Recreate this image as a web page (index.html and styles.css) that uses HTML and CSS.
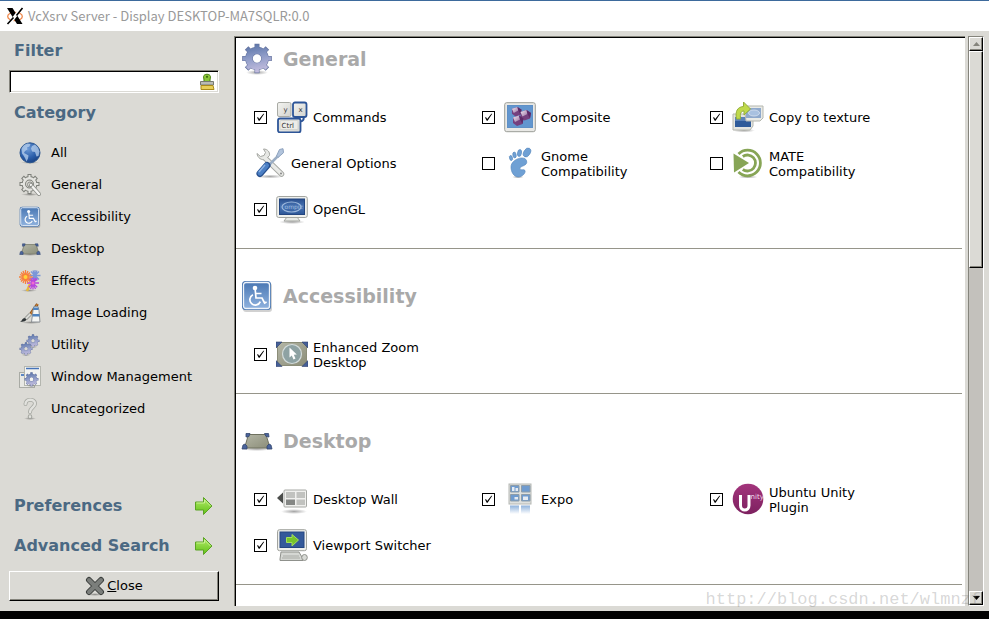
FILE: index.html
```html
<!DOCTYPE html>
<html lang="en">
<head>
<meta charset="utf-8">
<title>VcXsrv Server - Display DESKTOP-MA7SQLR:0.0</title>
<link rel="stylesheet" href="styles.css">
</head>
<body>
<svg class="defs" aria-hidden="true">
  <defs>
    <linearGradient id="g-gear" gradientUnits="userSpaceOnUse" x1="12" y1="1" x2="18" y2="31"><stop offset="0" stop-color="#5a74a8"/><stop offset=".45" stop-color="#8f9cc8"/><stop offset="1" stop-color="#cdc3e2"/></linearGradient>
    <radialGradient id="g-globe" cx=".4" cy=".3" r=".75"><stop offset="0" stop-color="#6d9ad6"/><stop offset=".6" stop-color="#2b5fab"/><stop offset="1" stop-color="#173f80"/></radialGradient>
    <linearGradient id="g-access" x1="0" y1="0" x2="0" y2="1"><stop offset="0" stop-color="#4a78b4"/><stop offset="1" stop-color="#8fb2de"/></linearGradient>
    <linearGradient id="g-desk" x1="0" y1="0" x2="1" y2="1"><stop offset="0" stop-color="#b4b6a6"/><stop offset="1" stop-color="#8b8d78"/></linearGradient>
    <linearGradient id="g-screen" x1="0" y1="0" x2="0" y2="1"><stop offset="0" stop-color="#2a4f8e"/><stop offset=".5" stop-color="#4a76b5"/><stop offset="1" stop-color="#2c5596"/></linearGradient>
    <linearGradient id="g-green" x1="0" y1="0" x2="0" y2="1"><stop offset="0" stop-color="#b5ec6a"/><stop offset="1" stop-color="#5fc016"/></linearGradient>
    <linearGradient id="g-unity" x1="0" y1="0" x2="0" y2="1"><stop offset="0" stop-color="#a3347c"/><stop offset="1" stop-color="#7d2160"/></linearGradient>
    <linearGradient id="g-fade" x1="0" y1="0" x2="0" y2="1"><stop offset="0" stop-color="#8fb2dc"/><stop offset="1" stop-color="#fff"/></linearGradient>
    <linearGradient id="g-key" x1="0" y1="0" x2="1" y2="1"><stop offset="0" stop-color="#f4f4f1"/><stop offset="1" stop-color="#d2d3ce"/></linearGradient>
    <linearGradient id="g-cube" x1="0" y1="0" x2="1" y2="1"><stop offset="0" stop-color="#f3ecf4"/><stop offset="1" stop-color="#9a70a2"/></linearGradient>
    <radialGradient id="g-shadow"><stop offset="0" stop-color="#000" stop-opacity=".35"/><stop offset="1" stop-color="#000" stop-opacity="0"/></radialGradient>

    <symbol id="i-gear" viewBox="0 0 32 32">
      <ellipse cx="16" cy="29.500" rx="11" ry="2.500" fill="url(#g-shadow)"/>
      <g fill="none" stroke="#66749f">
        <circle cx="16" cy="15.500" r="8" stroke-width="7.600"/>
        <path d="M16 .7v6M16 24.300v6M1.200 15.500h6M24.800 15.500h6M5.600 5.100l4.200 4.200M22.200 21.700l4.200 4.200M26.400 5.100l-4.200 4.200M9.800 21.700l-4.200 4.200" stroke-width="5"/>
      </g>
      <g fill="none" stroke="url(#g-gear)">
        <circle cx="16" cy="15.500" r="8" stroke-width="6.500"/>
        <path d="M16 1.500v6M16 23.500v6M2 15.500h6M24 15.500h6M6.200 5.700l4.200 4.200M21.600 21.100l4.200 4.200M25.800 5.700l-4.200 4.200M10.400 21.100l-4.200 4.200" stroke-width="3.800"/>
      </g>
    </symbol>

    <symbol id="i-globe" viewBox="0 0 22 22">
      <ellipse cx="11" cy="20.500" rx="9" ry="1.500" fill="url(#g-shadow)"/>
      <circle cx="11" cy="10.800" r="10" fill="url(#g-globe)" stroke="#2c568f"/>
      <path d="M2.500 7c1-3 3.500-5 6-5.500l3 .5-1 2.500-2.500 1 .5 2-2.500 1.500-1 2 2 1 2.500 1.500-.5 3-1.500 3-1.500-3.500-1.500-2.500-1.500-2zM13 4l3-1.500 3 3 1.500 4-1 4.500-2 .5-1.500-4.500-3-.5-1-3z" fill="#b9d2ee" opacity=".75"/>
    </symbol>

    <symbol id="i-prefs" viewBox="0 0 22 22">
      <ellipse cx="11" cy="20.500" rx="9" ry="1.500" fill="url(#g-shadow)"/>
      <g fill="none" stroke="#7d7f79"><circle cx="10.500" cy="10" r="5.700" stroke-width="4.500"/><path d="M10.500 0v4M10.500 16v4M.5 10h4M16.500 10h4M3.500 3l3 3M17.500 3l-3 3M3.500 17l3-3" stroke-width="4"/></g>
      <g fill="none" stroke="#e4e4e0"><circle cx="10.500" cy="10" r="5.700" stroke-width="2.500"/><path d="M10.500 1v4M10.500 15v4M1.500 10h4M15.500 10h4M4.200 3.700l3 3M16.800 3.700l-3 3M4.200 16.300l3-3" stroke-width="2"/></g>
      <path d="M12 11l8 9" stroke="#888a85" stroke-width="4" stroke-linecap="round"/>
      <path d="M12 11l8 9" stroke="#f4f4f2" stroke-width="2.500" stroke-linecap="round"/>
      <circle cx="11" cy="10.500" r="2.500" fill="none" stroke="#8b8d88"/>
    </symbol>

    <symbol id="i-access" viewBox="0 0 32 32">
      <rect x="2" y="3" width="29" height="29" rx="3" fill="#000" opacity=".18"/>
      <rect x="1" y="1" width="29" height="29" rx="3.500" fill="#4876b0"/>
      <rect x="2.500" y="2.500" width="26" height="26" rx="2.500" fill="url(#g-access)" stroke="#eef4fb" stroke-width="1.300"/>
      <circle cx="14" cy="8" r="2.300" fill="#fff"/>
      <g fill="none" stroke="#fff" stroke-width="1.700"><path d="M14.200 9.500l.8 8.500h6l2.600 5 2-1M14.800 13.500h5.700"/><path d="M11.900 14.800a5.400 5.400 0 1 0 7.400 6.800"/></g>
    </symbol>

    <symbol id="i-desktop" viewBox="0 0 32 32">
      <ellipse cx="16" cy="24" rx="15" ry="2" fill="url(#g-shadow)"/>
      <path d="M7.500 9.500h17.500l4 13.500H3.500z" fill="url(#g-desk)" stroke="#6f715f"/>
      <g fill="#4a639b" stroke="#34476f" stroke-width=".8"><path d="M5 8.500h4l-1 3-3 .5zM23.500 8.500h4l.5 3.500-3-.5z"/><path d="M1 24l1-4 2-1 2 2v3zM31 24l-1-4-2-1-2 2v3z"/></g>
    </symbol>

    <symbol id="i-effects" viewBox="0 0 22 22">
      <ellipse cx="10" cy="20.500" rx="8" ry="1.500" fill="url(#g-shadow)"/>
      <path d="M8 21l3-7" stroke="#e8b93a" stroke-width="2.500"/>
      <path d="M16 0v11M10.500 5.500h11M12 1.500l8 8M20 1.500l-8 8M14 .5l4 10M18 .5l-4 10" stroke="#7b96d8" stroke-width="1.300"/>
      <path d="M14 7.500v12M8 13h12M9.800 8.800l8.400 8.400M18.200 8.800l-8.400 8.400M11.500 8l5 11M16.500 8l-5 11" stroke="#b846dc" stroke-width="1.300"/>
      <path d="M6.500 0v14M0 7h13.500M2 2.500l9 9M11 2.500l-9 9M4 1l5 12M9 1L4 13M1 4.500l11 5M1 9.500l11-5" stroke="#f8803c" stroke-width="1.300"/>
      <circle cx="6.500" cy="7" r="2" fill="#ffd23c"/><circle cx="14" cy="13" r="1.500" fill="#f06bd0"/>
    </symbol>

    <symbol id="i-image" viewBox="0 0 22 22">
      <ellipse cx="12" cy="20.500" rx="10" ry="1.500" fill="url(#g-shadow)"/>
      <path d="M18.500 2l-7 10" stroke="#8a5018" stroke-width="3"/><path d="M18.500 2l-7 10" stroke="#c9803a" stroke-width="1.300"/>
      <path d="M11.500 12l-5 5" stroke="#8c8e89" stroke-width="3.500"/><path d="M11.500 12l-5 5" stroke="#d9dad6" stroke-width="2"/>
      <path d="M1 19.500c2 0 2-3.500 5-3.500l1.500 1.500c-1 2-3.500 2.500-6.500 2z" fill="#2e3436"/>
      <path d="M14 8.500l1-4h4l1 4 1 11.500h-8.500z" fill="#f4f5f3" stroke="#8c9196"/>
      <path d="M14 5.500h5.500v2.500H14zM13.500 12h7v2.500h-7z" fill="#4e83c0"/>
    </symbol>

    <symbol id="i-utility" viewBox="0 0 22 22">
      <use href="#i-gear" x="7" y="0" width="14" height="14"/>
      <use href="#i-gear" x="0" y="8" width="14" height="14"/>
    </symbol>

    <symbol id="i-windows" viewBox="0 0 22 22">
      <rect x=".5" y="6.500" width="15" height="15" fill="#e8e8e4" stroke="#a9aba5"/><path d="M2 9h5" stroke="#5b86c4" stroke-width="2"/>
      <rect x="5.500" y=".5" width="16" height="19" fill="#f3f3f0" stroke="#b4b6af"/><path d="M7 2.500h13" stroke="#4673b8" stroke-width="1.500"/>
      <use href="#i-gear" x="5" y="6" width="15" height="15"/>
    </symbol>

    <symbol id="i-unknown" viewBox="0 0 22 22">
      <ellipse cx="11" cy="20.500" rx="6" ry="1.500" fill="url(#g-shadow)"/>
      <g fill="none" stroke-linecap="round"><path d="M6.500 6c0-5.500 9.500-5.500 9.500-.5 0 4-5 4-5 8.500" stroke="#a5a7a1" stroke-width="4"/><path d="M11 18.500v.2" stroke="#a5a7a1" stroke-width="4.500"/><path d="M6.500 6c0-5.500 9.500-5.500 9.500-.5 0 4-5 4-5 8.500M11 18.500v.2" stroke="#e2e2de" stroke-width="2.400"/></g>
    </symbol>

    <symbol id="i-arrow" viewBox="0 0 22 22">
      <path d="M2.500 7h8V2.500l8.500 8.500-8.500 8.500V15h-8z" fill="url(#g-green)" stroke="#5ba324" stroke-linejoin="round"/>
      <path d="M3.500 8h8V5l6 6" fill="none" stroke="#d3f5a2" stroke-width=".8"/>
    </symbol>

    <symbol id="i-close" viewBox="0 0 20 20">
      <ellipse cx="10" cy="18.500" rx="9" ry="1.500" fill="url(#g-shadow)"/>
      <path d="M4 4l12 12M16 4L4 16" stroke="#3c3f3d" stroke-width="6" stroke-linecap="round"/>
      <path d="M4 4l12 12M16 4L4 16" stroke="#7b7e7b" stroke-width="4" stroke-linecap="round"/>
    </symbol>

    <symbol id="i-brush" viewBox="0 0 16 18">
      <path d="M5 9V7L4.500 3.500C5 .5 11 .5 11.500 3.500L11 7v2z" fill="#8cc63a" stroke="#4a8212"/>
      <circle cx="8" cy="3.800" r="1.100" fill="#3b6a10"/>
      <path d="M1.500 8.500h13V12h-13z" fill="#b9bbb4" stroke="#777a70"/>
      <path d="M2 12.500h12l1 4H2z" fill="#e8cf58" stroke="#a98a1a"/>
    </symbol>

    <symbol id="i-x11" viewBox="0 0 18 18">
      <ellipse cx="9" cy="9.500" rx="7.300" ry="4.200" fill="none" stroke="#ee8648" stroke-width="1.300"/>
      <path d="M1 1h5.500l10 16H11z" fill="#000"/>
      <path d="M15.500 1L3 17" stroke="#fff" stroke-width="3"/>
      <path d="M16.500 1l-6 7.500M7.500 10.500L1.500 17" stroke="#000" stroke-width="1.600"/>
    </symbol>

    <symbol id="i-commands" viewBox="0 0 32 32">
      <path d="M27 15c2 4-1 6-4 5" fill="none" stroke="#2d5598" stroke-width="2"/>
      <rect x="1.500" y="1.500" width="13.500" height="14" rx="1.500" fill="url(#g-key)" stroke="#a9aba5"/>
      <rect x="17" y="1.500" width="13.500" height="14.500" rx="2" fill="url(#g-key)" stroke="#2d5598" stroke-width="1.800"/>
      <rect x="2" y="17.500" width="22.500" height="14" rx="2" fill="url(#g-key)" stroke="#2d5598" stroke-width="1.800"/>
      <rect x="4" y="19.500" width="18" height="9" rx="1" fill="#ececE8" stroke="#c8cac4" stroke-width=".6"/>
      <g class="glyphs" fill="#333"><text x="7.500" y="10.500" font-size="7">y</text><text x="22.500" y="10.500" font-size="7">x</text><text x="5.500" y="26.500" font-size="7">Ctrl</text></g>
    </symbol>

    <symbol id="i-cube" viewBox="0 0 12 12">
      <path d="M1 3l6-2 4.500 3-1 5.500-5.500 2L1 8.500z" fill="#75407e"/>
      <path d="M1 3l6-2 1 4-5 2.500z" fill="url(#g-cube)"/>
      <path d="M7 1l4.500 3-1 5.500L8 5z" fill="#5d2a68"/>
    </symbol>

    <symbol id="i-composite" viewBox="0 0 32 32">
      <rect x=".7" y="1.700" width="30.600" height="29" rx="2" fill="#e9e9e6" stroke="#9b9d97"/>
      <rect x="3.500" y="4.500" width="25" height="22" fill="#6296cf" stroke="#5f90c6"/>
      <use href="#i-cube" x="7" y="5" width="11" height="11"/>
      <use href="#i-cube" x="15.500" y="8" width="12" height="12"/>
      <use href="#i-cube" x="8" y="13.500" width="12" height="12"/>
    </symbol>

    <symbol id="i-copy" viewBox="0 0 32 32">
      <ellipse cx="12" cy="29.500" rx="11" ry="2" fill="url(#g-shadow)"/>
      <path d="M1 13h20v12l-3 4H1z" fill="#e4e5e1" stroke="#b5b7af"/><path d="M3 16h16v10H3z" fill="#2f5b9a"/><path d="M3 16h16v4H3z" fill="#5c82b8"/>
      <path d="M12 5h19v12l-3 3H14z" fill="#e9eae6" stroke="#b5b7af"/><path d="M14 7h15v10H14z" fill="#8fa9cc"/><ellipse cx="22" cy="12" rx="5.500" ry="3" fill="#a9c1e0" stroke="#dfe8f3" stroke-width=".7"/>
      <path d="M4.500 18c-1.500-8 1-12 7-12.500V1l7 7-6.500 6V10c-3.500 0-4 3-3.500 8z" fill="#bfd94a" stroke="#94ae3a"/>
    </symbol>

    <symbol id="i-tools" viewBox="0 0 32 32">
      <ellipse cx="16" cy="29.500" rx="13" ry="2" fill="url(#g-shadow)"/>
      <path d="M11 11l16.500 16" stroke="#a5a7a2" stroke-width="5.500" stroke-linecap="round"/>
      <path d="M3 6.500c.5 4.500 4.500 7 8.500 6l4-4c.5-3.500-2-6.500-6-6.500l2 3.500-1.500 3-3.500 1z" fill="#e6e7e4" stroke="#a5a7a2"/>
      <path d="M11 11l16.500 16" stroke="#e9eae7" stroke-width="3.800" stroke-linecap="round"/><circle cx="27" cy="26.500" r="1" fill="#888"/>
      <path d="M14 19L25 8" stroke="#9badc4" stroke-width="2.500"/><path d="M22.500 9l3-6.500 3.500-.8.500 4-5.500 4.800z" fill="#b2c4dc" stroke="#8da2be"/>
      <path d="M6 26.500l7-8" stroke="#274f8d" stroke-width="7" stroke-linecap="round"/><path d="M6 26l6.500-7.500" stroke="#4b7fc4" stroke-width="5" stroke-linecap="round"/><path d="M5 25l6-7" stroke="#8eb4e4" stroke-width="1.300"/>
    </symbol>

    <symbol id="i-gnome" viewBox="0 0 32 32">
      <ellipse cx="14" cy="30" rx="6" ry="1.500" fill="url(#g-shadow)"/>
      <g fill="#6fa0d4" stroke="#5083ba" stroke-width=".6">
        <ellipse cx="23" cy="5.500" rx="3.200" ry="4.800" transform="rotate(30 23 5.500)"/><ellipse cx="15.500" cy="6" rx="2" ry="3.500" transform="rotate(10 15.500 6)"/><ellipse cx="10.500" cy="8" rx="1.700" ry="3" transform="rotate(-8 10.500 8)"/><ellipse cx="7" cy="11" rx="1.500" ry="2.600" transform="rotate(-15 7 11)"/>
        <path d="M22.500 13.500c2 6-7.500 5-6.500 8.500.6 2 4-.5 5 1.500 1 2.500-3 6.500-6.500 6.500-5 0-7.500-5.500-7.500-10 0-8 13.500-12 15.500-6.500z"/>
      </g>
    </symbol>

    <symbol id="i-mate" viewBox="0 0 32 32">
      <ellipse cx="16" cy="30" rx="10" ry="1.500" fill="url(#g-shadow)"/>
      <g fill="none" stroke="#87a556" stroke-width="2.800"><path d="M6.500 7a12.800 12.800 0 1 1 0 18"/><path d="M10.800 9.500a8 8 0 1 1 0 13"/></g>
      <path d="M1.500 6.500L17 16 2 25.500z" fill="#87a556"/>
    </symbol>

    <symbol id="i-opengl" viewBox="0 0 32 32">
      <ellipse cx="16" cy="29" rx="13" ry="2" fill="url(#g-shadow)"/>
      <path d="M11 24h10l3 4H8z" fill="#e8e9e6" stroke="#a4a6a1"/>
      <rect x=".7" y="3.500" width="30.600" height="21" rx="2" fill="#eff0ed" stroke="#a4a6a1"/>
      <rect x="3.500" y="6" width="25" height="15.500" fill="url(#g-screen)" stroke="#244680"/>
      <ellipse cx="15.500" cy="14" rx="9.500" ry="5" fill="none" stroke="#9db8dc" stroke-width="1.200"/>
      <text class="glyphs" x="8.500" y="16" font-size="6" fill="#9db8dc">ompiz</text>
    </symbol>

    <symbol id="i-zoom" viewBox="0 0 32 32">
      <rect x="1.500" y="4.500" width="29" height="23" fill="url(#g-desk)" stroke="#8b8d78"/>
      <path d="M0 4h6L0 10zM32 4h-6l6 6zM0 28.500h6l-6-6zM32 28.500h-6l6-6z" fill="#455f97" stroke="#2d406c" stroke-width=".6"/>
      <circle cx="16" cy="16" r="9.500" fill="#8ea2a3" stroke="#d3dcdc" stroke-width="1.200"/>
      <path d="M13.500 9.500v10l2.300-2 1.700 4 2-1-1.700-3.700 3-.3z" fill="#fff"/>
    </symbol>

    <symbol id="i-wall" viewBox="0 0 32 32">
      <ellipse cx="18" cy="28.500" rx="13" ry="2.500" fill="url(#g-shadow)"/>
      <path d="M7 9.500v11L1 15z" fill="#4b4d4b"/>
      <rect x="8" y="7" width="22.500" height="17" rx="1" fill="#f0f0ee" stroke="#a6a8a4"/>
      <path d="M10 9h9v6h-9zM20.500 9H29v6h-8.500zM20.500 16.500H29v5.500h-8.500z" fill="#c1c2bf"/><path d="M10 16.500h9v5.500h-9z" fill="#858785"/>
    </symbol>

    <symbol id="i-expo" viewBox="0 0 32 32">
      <rect x="5" y="1" width="22" height="20" fill="#dfe1df" stroke="#b5b7b3"/>
      <g fill="#6f9bcf" stroke="#8e9da9"><path d="M6.500 2.500h8.500v6.500H6.500zM17.500 2.500H26v6.500h-8.500zM6.500 11.500h8.500V18H6.500zM17.500 11.500H26V18h-8.500z"/></g>
      <path d="M8 4h2.500v4H8zM11.500 5H14v3h-2.500zM10.500 14H14v2.500h-3.500zM19 13.500h5V17h-5z" fill="#e5ebf3"/>
      <path d="M6 22.500h9V31H6zM17 22.500h9V31h-9z" fill="url(#g-fade)"/>
    </symbol>

    <symbol id="i-unity" viewBox="0 0 32 32">
      <circle cx="16" cy="16" r="15.300" fill="url(#g-unity)"/>
      <path d="M8.500 12v10.500c0 6 8.500 6 8.500 0V12" fill="none" stroke="#fff" stroke-width="3"/>
      <text class="glyphs" x="18.500" y="16" font-size="7" fill="#f4dcec">nity</text>
    </symbol>

    <symbol id="i-switcher" viewBox="0 0 32 32">
      <path d="M5 23h18l4 7v1.500H4V30z" fill="#d5d7d3" stroke="#8f918c"/><path d="M7 27h16M6 29h18" stroke="#a9aba6"/>
      <rect x="1.500" y=".7" width="29" height="21" rx="2" fill="#eeefec" stroke="#a1a39e"/>
      <rect x="4" y="3" width="24" height="15.500" fill="#34599a" stroke="#244680"/>
      <path d="M10.500 8.500h5.500V5.500l6.500 5.500-6.500 6v-3.500h-5.500z" fill="#76c42c" stroke="#a4e05c"/>
      <ellipse cx="28.500" cy="28.500" rx="2.800" ry="3" fill="#d8dad6" stroke="#8f918c"/>
    </symbol>
  </defs>
</svg>

<div class="window">
  <header class="titlebar">
    <svg class="title-icon" aria-hidden="true"><use href="#i-x11"/></svg>
    <h1 class="title">VcXsrv Server - Display DESKTOP-MA7SQLR:0.0</h1>
  </header>

  <div class="body">
    <aside class="sidebar">
      <label class="side-heading" for="filter">Filter</label>
      <div class="field">
        <input id="filter" class="field-input" type="text">
        <button class="field-clear" type="button" aria-label="Clear"><svg width="16" height="18"><use href="#i-brush"/></svg></button>
      </div>
      <h2 class="side-heading category-heading">Category</h2>
      <nav class="categories">
        <button class="category" type="button"><svg class="small-icon"><use href="#i-globe"/></svg>All</button>
        <button class="category" type="button"><svg class="small-icon"><use href="#i-prefs"/></svg>General</button>
        <button class="category" type="button"><svg class="small-icon"><use href="#i-access"/></svg>Accessibility</button>
        <button class="category" type="button"><svg class="small-icon"><use href="#i-desktop"/></svg>Desktop</button>
        <button class="category" type="button"><svg class="small-icon"><use href="#i-effects"/></svg>Effects</button>
        <button class="category" type="button"><svg class="small-icon"><use href="#i-image"/></svg>Image Loading</button>
        <button class="category" type="button"><svg class="small-icon"><use href="#i-utility"/></svg>Utility</button>
        <button class="category" type="button"><svg class="small-icon"><use href="#i-windows"/></svg>Window Management</button>
        <button class="category" type="button"><svg class="small-icon"><use href="#i-unknown"/></svg>Uncategorized</button>
      </nav>
      <div class="side-links">
        <button class="side-link" type="button">Preferences<svg class="small-icon"><use href="#i-arrow"/></svg></button>
        <button class="side-link" type="button">Advanced Search<svg class="small-icon"><use href="#i-arrow"/></svg></button>
      </div>
      <button class="close" type="button"><svg width="20" height="20"><use href="#i-close"/></svg><span><u>C</u>lose</span></button>
    </aside>

    <main class="panel">
      <section class="group">
        <h2 class="group-title"><svg class="icon"><use href="#i-gear"/></svg>General</h2>
        <div class="plugins">
          <div class="plugin"><input class="check" type="checkbox" id="p-commands" checked><label class="plugin-label" for="p-commands"><svg class="icon"><use href="#i-commands"/></svg><span class="name">Commands</span></label></div>
          <div class="plugin"><input class="check" type="checkbox" id="p-composite" checked><label class="plugin-label" for="p-composite"><svg class="icon"><use href="#i-composite"/></svg><span class="name">Composite</span></label></div>
          <div class="plugin"><input class="check" type="checkbox" id="p-copy" checked><label class="plugin-label" for="p-copy"><svg class="icon"><use href="#i-copy"/></svg><span class="name">Copy to texture</span></label></div>
          <div class="plugin"><button class="plugin-label" type="button"><svg class="icon"><use href="#i-tools"/></svg><span class="name">General Options</span></button></div>
          <div class="plugin"><input class="check" type="checkbox" id="p-gnome"><label class="plugin-label" for="p-gnome"><svg class="icon"><use href="#i-gnome"/></svg><span class="name">Gnome Compatibility</span></label></div>
          <div class="plugin"><input class="check" type="checkbox" id="p-mate"><label class="plugin-label" for="p-mate"><svg class="icon"><use href="#i-mate"/></svg><span class="name">MATE Compatibility</span></label></div>
          <div class="plugin"><input class="check" type="checkbox" id="p-opengl" checked><label class="plugin-label" for="p-opengl"><svg class="icon"><use href="#i-opengl"/></svg><span class="name">OpenGL</span></label></div>
        </div>
      </section>
      <section class="group">
        <h2 class="group-title"><svg class="icon"><use href="#i-access"/></svg>Accessibility</h2>
        <div class="plugins">
          <div class="plugin"><input class="check" type="checkbox" id="p-zoom" checked><label class="plugin-label" for="p-zoom"><svg class="icon"><use href="#i-zoom"/></svg><span class="name">Enhanced Zoom Desktop</span></label></div>
        </div>
      </section>
      <section class="group">
        <h2 class="group-title"><svg class="icon"><use href="#i-desktop"/></svg>Desktop</h2>
        <div class="plugins">
          <div class="plugin"><input class="check" type="checkbox" id="p-wall" checked><label class="plugin-label" for="p-wall"><svg class="icon"><use href="#i-wall"/></svg><span class="name">Desktop Wall</span></label></div>
          <div class="plugin"><input class="check" type="checkbox" id="p-expo" checked><label class="plugin-label" for="p-expo"><svg class="icon"><use href="#i-expo"/></svg><span class="name">Expo</span></label></div>
          <div class="plugin"><input class="check" type="checkbox" id="p-unity" checked><label class="plugin-label" for="p-unity"><svg class="icon"><use href="#i-unity"/></svg><span class="name">Ubuntu Unity Plugin</span></label></div>
          <div class="plugin"><input class="check" type="checkbox" id="p-switcher" checked><label class="plugin-label" for="p-switcher"><svg class="icon"><use href="#i-switcher"/></svg><span class="name">Viewport Switcher</span></label></div>
        </div>
      </section>
    </main>

    <div class="scrollbar">
      <button class="scroll-button" type="button" aria-label="Scroll up"><svg width="7" height="4"><path d="M0 4l3.500-4L7 4z" fill="#85847c"/></svg></button>
      <div class="scroll-thumb"></div>
      <div class="scroll-space"></div>
      <button class="scroll-button" type="button" aria-label="Scroll down"><svg width="7" height="4"><path d="M0 0h7L3.500 4z" fill="#000"/></svg></button>
    </div>
  </div>
  <div class="watermark">http://blog.csdn.net/wlmnzf</div>
</div>
</body>
</html>
```
FILE: styles.css
```css
* {
  box-sizing: border-box;
}

body {
  margin: 0;
  background: #000;
  color: #000;
  font: 13px/15px "DejaVu Sans", sans-serif;
}

h1,
h2 {
  margin: 0;
}

button {
  margin: 0;
  padding: 0;
  border: 0;
  background: none;
  color: inherit;
  font: inherit;
  text-align: left;
}

svg {
  flex: none;
  display: block;
}

.defs {
  position: absolute;
  width: 0;
  height: 0;
}

.glyphs {
  font-family: "DejaVu Sans", sans-serif;
}

.window {
  position: relative;
  display: flex;
  flex-direction: column;
  height: 100vh;
  border-bottom: 8px solid #000;
  overflow: hidden;
}

.titlebar {
  display: flex;
  align-items: center;
  gap: 4px;
  height: 31px;
  padding-left: 6px;
  border-top: 1px solid #3d6a9c;
  background: #fff;
}

.title-icon {
  width: 18px;
  height: 18px;
}

.title {
  color: #999;
  font: 13px/18px "Noto Sans CJK SC", "Noto Sans", sans-serif;
}

.body {
  flex: 1;
  display: flex;
  min-height: 0;
  padding: 5px 5px 5px 9px;
  background: #dbdad5;
}

.sidebar {
  display: flex;
  flex-direction: column;
  width: 210px;
  margin-right: 15px;
  padding-bottom: 5px;
}

.side-heading {
  padding: 5px 5px 4px;
  color: #4b6983;
  font-size: 16px;
  font-weight: bold;
  line-height: 20px;
}

.field {
  display: flex;
  align-items: center;
  height: 23px;
  margin-top: 5px;
  padding-right: 3px;
  border: 1px solid;
  border-color: #85847c #fff #fff #85847c;
  background: #fff;
  box-shadow: inset 1px 1px #000, inset -1px -1px #dbdad5;
}

.field-input {
  flex: 1;
  min-width: 0;
  padding: 0 5px;
  border: 0;
  outline: 0;
  background: none;
  font: inherit;
}

.category-heading {
  margin-top: 5px;
}

.categories {
  display: flex;
  flex-direction: column;
  margin-top: 10px;
}

.category {
  display: flex;
  align-items: center;
  gap: 10px;
  height: 32px;
  padding: 0 0 1px 10px;
}

.small-icon {
  width: 22px;
  height: 22px;
}

.side-links {
  margin-top: auto;
}

.side-link {
  display: flex;
  align-items: center;
  justify-content: space-between;
  width: 100%;
  height: 40px;
  padding: 0 4px 1px 5px;
  color: #4b6983;
  font-size: 16px;
  font-weight: bold;
}

.close {
  display: flex;
  align-items: center;
  justify-content: center;
  gap: 2px;
  height: 30px;
  margin-top: 5px;
  padding-bottom: 1px;
  border: 1px solid;
  border-color: #fff #000 #000 #fff;
  box-shadow: inset -1px -1px #85847c;
}

.panel {
  flex: 1;
  min-width: 0;
  border: 1px solid;
  border-color: #85847c #fff #fff #85847c;
  border-right: 0;
  border-bottom: 0;
  background: #fff;
  box-shadow: inset 1px 1px #000;
  overflow: hidden;
  padding: 1px 3px 0 1px;
}

.group {
  padding: 31px 0 16px;
  border-bottom: 1px solid #96958a;
}

.group:first-child {
  padding-top: 5px;
}

.group-title {
  display: flex;
  align-items: center;
  gap: 10px;
  margin: 0 0 19px 5px;
  color: #a9a9a9;
  font-size: 19px;
  line-height: 32px;
}

.icon {
  width: 32px;
  height: 32px;
}

.plugins {
  display: grid;
  grid-template-columns: repeat(auto-fill, 228px);
  grid-auto-rows: 46px;
  padding-left: 18px;
}

.plugin,
.plugin-label {
  display: flex;
  align-items: center;
}

.plugin {
  gap: 9px;
}

.plugin-label {
  gap: 5px;
}

.name {
  max-width: 120px;
  padding-top: 1px;
}

.check {
  appearance: none;
  flex: none;
  width: 13px;
  height: 13px;
  margin: 0;
  border: 1px solid #000;
  background: #fff;
}

.check:checked::before {
  content: "";
  display: block;
  width: 11px;
  height: 11px;
  background: #000;
  clip-path: polygon(18% 54%, 28% 52%, 38% 68%, 76% 20%, 84% 20%, 42% 84%, 34% 84%);
}

.scrollbar {
  display: flex;
  flex-direction: column;
  width: 16px;
  margin-left: 3px;
  border: 1px solid;
  border-color: #85847c #fff #fff #85847c;
  background: #c3c1bc;
}

.scroll-button,
.scroll-thumb {
  border: 1px solid;
  border-color: #fff #000 #000 #fff;
  background: #dbdad5;
  box-shadow: inset -1px -1px #85847c;
}

.scroll-button {
  display: flex;
  flex: none;
  align-items: center;
  justify-content: center;
  height: 14px;
}

.scroll-thumb {
  flex: 216;
}

.scroll-space {
  flex: 324;
}

.watermark {
  position: absolute;
  right: 8px;
  bottom: 1px;
  color: rgba(120, 120, 120, 0.3);
  font: 17px/20px "Liberation Mono", monospace;
  pointer-events: none;
}
```
